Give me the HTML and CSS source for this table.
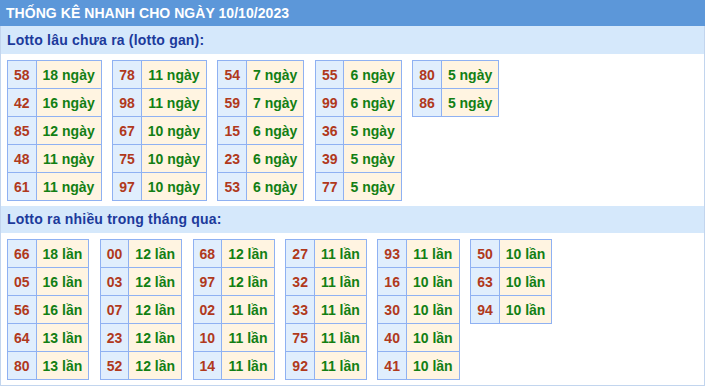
FILE: index.html
```html
<!DOCTYPE html>
<html lang="vi">
<head>
<meta charset="utf-8">
<title>Thống kê nhanh</title>
<link rel="stylesheet" href="styles.css">
</head>
<body>
<div class="box">
  <div class="header">THỐNG KÊ NHANH CHO NGÀY 10/10/2023</div>
  <div class="title">Lotto lâu chưa ra (lotto gan):</div>
  <div class="tables">
    <table><tr><td class="n">58</td><td class="v">18 ngày</td></tr><tr><td class="n">42</td><td class="v">16 ngày</td></tr><tr><td class="n">85</td><td class="v">12 ngày</td></tr><tr><td class="n">48</td><td class="v">11 ngày</td></tr><tr><td class="n">61</td><td class="v">11 ngày</td></tr></table>
    <table><tr><td class="n">78</td><td class="v">11 ngày</td></tr><tr><td class="n">98</td><td class="v">11 ngày</td></tr><tr><td class="n">67</td><td class="v">10 ngày</td></tr><tr><td class="n">75</td><td class="v">10 ngày</td></tr><tr><td class="n">97</td><td class="v">10 ngày</td></tr></table>
    <table><tr><td class="n">54</td><td class="v">7 ngày</td></tr><tr><td class="n">59</td><td class="v">7 ngày</td></tr><tr><td class="n">15</td><td class="v">6 ngày</td></tr><tr><td class="n">23</td><td class="v">6 ngày</td></tr><tr><td class="n">53</td><td class="v">6 ngày</td></tr></table>
    <table><tr><td class="n">55</td><td class="v">6 ngày</td></tr><tr><td class="n">99</td><td class="v">6 ngày</td></tr><tr><td class="n">36</td><td class="v">5 ngày</td></tr><tr><td class="n">39</td><td class="v">5 ngày</td></tr><tr><td class="n">77</td><td class="v">5 ngày</td></tr></table>
    <table><tr><td class="n">80</td><td class="v">5 ngày</td></tr><tr><td class="n">86</td><td class="v">5 ngày</td></tr></table>
  </div>
  <div class="title second">Lotto ra nhiều trong tháng qua:</div>
  <div class="tables">
    <table><tr><td class="n">66</td><td class="v">18 lần</td></tr><tr><td class="n">05</td><td class="v">16 lần</td></tr><tr><td class="n">56</td><td class="v">16 lần</td></tr><tr><td class="n">64</td><td class="v">13 lần</td></tr><tr><td class="n">80</td><td class="v">13 lần</td></tr></table>
    <table><tr><td class="n">00</td><td class="v">12 lần</td></tr><tr><td class="n">03</td><td class="v">12 lần</td></tr><tr><td class="n">07</td><td class="v">12 lần</td></tr><tr><td class="n">23</td><td class="v">12 lần</td></tr><tr><td class="n">52</td><td class="v">12 lần</td></tr></table>
    <table><tr><td class="n">68</td><td class="v">12 lần</td></tr><tr><td class="n">97</td><td class="v">12 lần</td></tr><tr><td class="n">02</td><td class="v">11 lần</td></tr><tr><td class="n">10</td><td class="v">11 lần</td></tr><tr><td class="n">14</td><td class="v">11 lần</td></tr></table>
    <table><tr><td class="n">27</td><td class="v">11 lần</td></tr><tr><td class="n">32</td><td class="v">11 lần</td></tr><tr><td class="n">33</td><td class="v">11 lần</td></tr><tr><td class="n">75</td><td class="v">11 lần</td></tr><tr><td class="n">92</td><td class="v">11 lần</td></tr></table>
    <table><tr><td class="n">93</td><td class="v">11 lần</td></tr><tr><td class="n">16</td><td class="v">10 lần</td></tr><tr><td class="n">30</td><td class="v">10 lần</td></tr><tr><td class="n">40</td><td class="v">10 lần</td></tr><tr><td class="n">41</td><td class="v">10 lần</td></tr></table>
    <table><tr><td class="n">50</td><td class="v">10 lần</td></tr><tr><td class="n">63</td><td class="v">10 lần</td></tr><tr><td class="n">94</td><td class="v">10 lần</td></tr></table>
  </div>
</div>
</body>
</html>
```
FILE: styles.css
```css
html, body {
  margin: 0;
  padding: 0;
  background: #ffffff;
}
body {
  font-family: "Liberation Sans", Arial, sans-serif;
  font-size: 14px;
  font-weight: bold;
}
.box {
  width: 703px;
  border-left: 1px solid #c2d5ee;
  border-right: 1px solid #c2d5ee;
  border-bottom: 1px solid #c2d5ee;
  padding-bottom: 5px;
}
.header {
  background: #5c97d9;
  color: #ffffff;
  height: 26px;
  line-height: 27px;
  padding-left: 6px;
  margin: 0 -1px;
  letter-spacing: 0.05px;
}
.title {
  background: #d5e8fb;
  color: #1c3a9b;
  height: 28px;
  line-height: 28px;
  padding-left: 6px;
  letter-spacing: 0.2px;
}
.title.second {
  height: 27px;
  line-height: 27px;
  margin-top: 5px;
}
.tables {
  display: flex;
  align-items: flex-start;
  gap: 10.5px;
  padding: 6px 0 0 6px;
}
table {
  border-collapse: collapse;
}
td {
  border: 1px solid #8fb1f2;
  height: 27px;
  padding: 0 6px;
  white-space: nowrap;
  text-align: center;
}
td.n {
  background: #e0eefd;
  color: #b0391c;
}
td.v {
  background: #fff4e1;
  color: #127f14;
}
```
